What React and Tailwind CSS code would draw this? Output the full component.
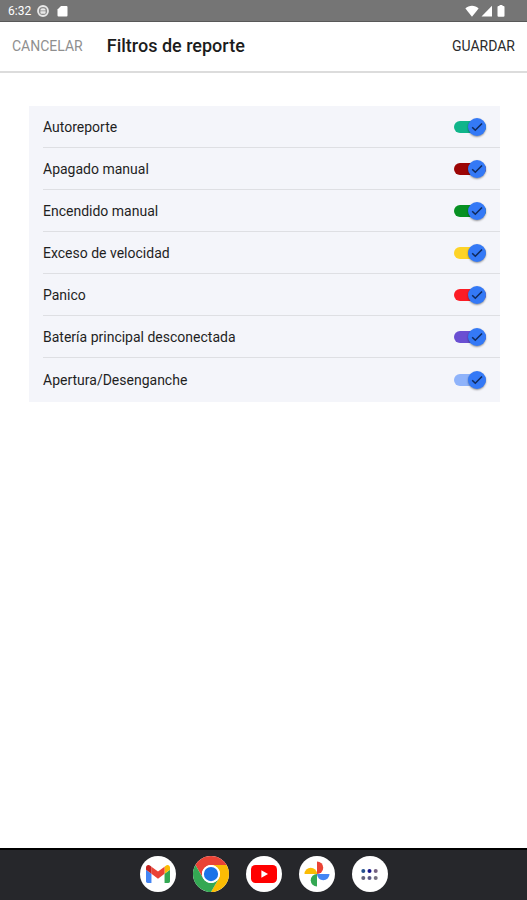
import { useState } from 'react';

const FILTROS = [
  { id: 'autoreporte', nombre: 'Autoreporte', color: 'bg-[#10b58a]' },
  { id: 'apagado', nombre: 'Apagado manual', color: 'bg-[#9c0505]' },
  { id: 'encendido', nombre: 'Encendido manual', color: 'bg-[#079022]' },
  { id: 'velocidad', nombre: 'Exceso de velocidad', color: 'bg-[#fdd327]' },
  { id: 'panico', nombre: 'Panico', color: 'bg-[#fc1c25]' },
  { id: 'bateria', nombre: 'Batería principal desconectada', color: 'bg-[#6a4fd2]' },
  { id: 'apertura', nombre: 'Apertura/Desenganche', color: 'bg-[#8fb3fa]' },
];

function StatusBar() {
  return (
    <div className="flex h-[22px] items-center justify-between border-b border-[#585858] bg-[#757575] pl-2 pr-[22px] pt-px text-white">
      <div className="flex items-center gap-[6px]">
        <span className="text-xs">6:32</span>
        <svg className="size-3" viewBox="0 0 12 12">
          <circle cx="6" cy="6" r="5" fill="#8b8b8b" stroke="#e8e8e8" strokeWidth="1.8" />
          <path d="M3.4 5.6a2.6 2.4 0 0 1 5.2 0zM3.4 6.3h5.2v1.4a1 1 0 0 1-1 1H4.4a1 1 0 0 1-1-1z" fill="#e8e8e8" />
        </svg>
        <svg className="ml-[2px] h-3 w-[11px]" viewBox="0 0 11 12">
          <path d="M4 1h5.5a1 1 0 0 1 1 1v8.500a1 1 0 0 1-1 1h-8a1 1 0 0 1-1-1V4.500z" fill="#fff" />
        </svg>
      </div>
      <div className="flex items-center gap-[2px]">
        <svg className="h-3 w-[14px]" viewBox="0 0 14 12">
          <path d="M7 11.800 0.400 3.400C2.200 1.700 4.500 0.800 7 0.800s4.800 0.900 6.600 2.600z" fill="#fff" />
        </svg>
        <svg className="size-3" viewBox="0 0 12 12">
          <path d="M11 0.800v10.700H0.500z" fill="#fff" />
        </svg>
        <svg className="ml-[2px] h-3 w-2" viewBox="0 0 8 12">
          <path d="M2.500 0h3v1h1a1 1 0 0 1 1 1v8.800a1 1 0 0 1-1 1h-5a1 1 0 0 1-1-1V2a1 1 0 0 1 1-1h1z" fill="#fff" />
        </svg>
      </div>
    </div>
  );
}

function Interruptor({ id, color, activo, onChange }) {
  return (
    <span className="relative flex h-[18px] w-8 items-center">
      <input
        id={id}
        type="checkbox"
        checked={activo}
        onChange={onChange}
        className={`peer h-3 w-full cursor-pointer appearance-none rounded-full ${activo ? color : 'bg-gray-300'}`}
      />
      <span className="pointer-events-none absolute left-0 top-0 size-[18px] rounded-full bg-white shadow-[0_1px_2px_rgba(0,0,0,0.4)] transition-all peer-checked:left-[14px] peer-checked:bg-[#3479f6]">
        {activo && (
          <svg className="size-[18px]" viewBox="0 0 18 18" fill="none">
            <path d="M4.200 9.200 7.300 12.200 14 5.500" stroke="#102a5c" strokeWidth="1.600" />
          </svg>
        )}
      </span>
    </span>
  );
}

function Gmail() {
  return (
    <svg className="h-[18px] w-6" viewBox="52 42 88 66">
      <path fill="#4285f4" d="M58 108h14V74L52 59v43c0 3.320 2.690 6 6 6" />
      <path fill="#34a853" d="M120 108h14c3.320 0 6-2.690 6-6V59l-20 15" />
      <path fill="#fbbc04" d="M120 48v26l20-15v-8c0-7.420-8.470-11.650-14.400-7.200" />
      <path fill="#ea4335" d="M72 74V48l24 18 24-18v26L96 92" />
      <path fill="#c5221f" d="M52 51v8l20 15V48l-5.600-4.200c-5.940-4.450-14.400-.22-14.400 7.200" />
    </svg>
  );
}

function Chrome() {
  return (
    <svg className="size-9" viewBox="0 0 48 48">
      <circle cx="24" cy="24" r="12" fill="#fff" />
      <path fill="#ea4335" d="M3.220 12A24 24 0 0 1 44.780 12H24a12 12 0 0 0-10.390 18z" />
      <path fill="#fbbc04" d="M44.780 12A24 24 0 0 1 24 48l10.390-18A12 12 0 0 0 24 12z" />
      <path fill="#34a853" d="M24 48A24 24 0 0 1 3.220 12l10.390 18a12 12 0 0 0 20.780 0z" />
      <circle cx="24" cy="24" r="12" fill="#fff" />
      <circle cx="24" cy="24" r="9.500" fill="#1a73e8" />
    </svg>
  );
}

function YouTube() {
  return (
    <svg className="h-[18px] w-[26px]" viewBox="0 0 26 18">
      <rect width="26" height="18" rx="4.500" fill="#ff0000" />
      <path d="M10.400 5.200v7.600L17 9z" fill="#fff" />
    </svg>
  );
}

function Fotos() {
  return (
    <svg className="size-[26px]" viewBox="0 0 26 26">
      <path fill="#ea4335" d="M13 0.500a6.250 6.250 0 0 1 0 12.500z" />
      <path fill="#4285f4" d="M25.500 13a6.250 6.250 0 0 1-12.500 0z" />
      <path fill="#34a853" d="M13 25.500a6.250 6.250 0 0 1 0-12.500z" />
      <path fill="#fbbc04" d="M0.500 13a6.250 6.250 0 0 1 12.500 0z" />
    </svg>
  );
}

function Aplicaciones() {
  return (
    <svg className="h-[11px] w-[17px]" viewBox="0 0 17 11">
      <circle cx="2.300" cy="2" r="2" fill="#24508e" />
      <circle cx="8.500" cy="2" r="2" fill="#17178c" />
      <circle cx="14.700" cy="2" r="2" fill="#75617f" />
      <circle cx="2.300" cy="9" r="2" fill="#62627c" />
      <circle cx="8.500" cy="9" r="2" fill="#5c5a86" />
      <circle cx="14.700" cy="9" r="2" fill="#75707f" />
    </svg>
  );
}

const DOCK = [
  { nombre: 'Gmail', Icono: Gmail },
  { nombre: 'Chrome', Icono: Chrome },
  { nombre: 'YouTube', Icono: YouTube },
  { nombre: 'Fotos', Icono: Fotos },
  { nombre: 'Aplicaciones', Icono: Aplicaciones },
];

export default function App() {
  const [activos, setActivos] = useState(FILTROS.map(f => f.id));

  const toggleFiltro = (id) => {
    setActivos(prev =>
      prev.includes(id) ? prev.filter(i => i !== id) : [...prev, id]
    );
  };

  return (
    <div className="flex min-h-screen flex-col bg-white font-['Roboto',sans-serif]">
      <StatusBar />

      <header className="flex h-[51px] items-center border-b-2 border-[#dcdcdc] px-3 pb-[2px]">
        <button type="button" className="text-sm text-[#8f8f8f]">CANCELAR</button>
        <h1 className="ml-6 flex-1 text-lg font-medium text-[#1c1c1c]">Filtros de reporte</h1>
        <button type="button" className="text-sm text-[#2b2b2b]">GUARDAR</button>
      </header>

      <main className="flex-1 pl-[29px] pr-[27px] pt-[33px]">
        <ul className="bg-[#f4f5fa] pl-[14px]">
          {FILTROS.map(f => (
            <li key={f.id} className="flex h-[42px] items-center justify-between border-b border-[#dedfe3] pr-[14px] last:h-11 last:border-b-0">
              <label htmlFor={f.id} className="flex-1 cursor-pointer text-sm text-[#1f1f1f]">{f.nombre}</label>
              <Interruptor
                id={f.id}
                color={f.color}
                activo={activos.includes(f.id)}
                onChange={() => toggleFiltro(f.id)}
              />
            </li>
          ))}
        </ul>
      </main>

      <nav className="flex h-[52px] items-center justify-center gap-[17px] border-t-2 border-black bg-[#26272b] pb-[2px]">
        {DOCK.map(({ nombre, Icono }) => (
          <button
            key={nombre}
            type="button"
            aria-label={nombre}
            className="flex size-9 items-center justify-center rounded-full bg-white"
          >
            <Icono />
          </button>
        ))}
      </nav>
    </div>
  );
}
